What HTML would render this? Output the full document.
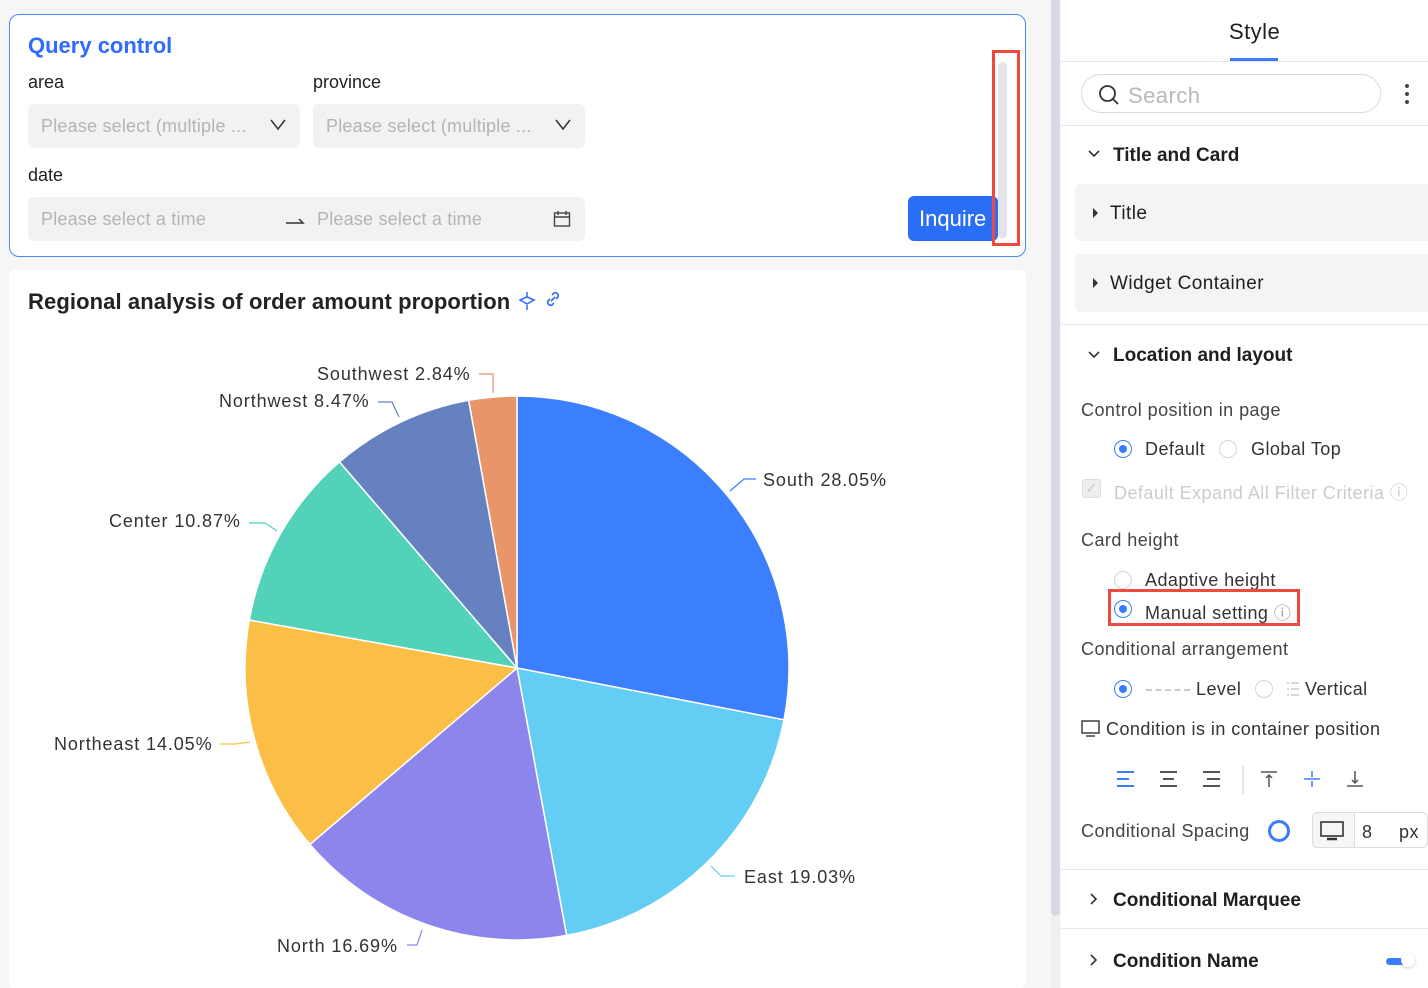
<!DOCTYPE html>
<html><head><meta charset="utf-8"><style>
*{box-sizing:border-box;margin:0;padding:0}
body{width:1428px;height:988px;overflow:hidden;background:#f6f6f7;font-family:"Liberation Sans",sans-serif;position:relative;color:#222}
.a{position:absolute;white-space:nowrap}
.sel{position:absolute;background:#f2f2f3;border-radius:6px;height:44px;color:#b4b4b8;font-size:18px;line-height:44px;padding-left:13px;letter-spacing:0.2px}
.rp{position:absolute;left:1061px;top:0;width:367px;height:988px;background:#fff}
.rp .a{letter-spacing:0.45px}
.rp .a.h{letter-spacing:0}
.hr{position:absolute;left:0;width:367px;height:1px;background:#e8e8ea}
.h{font-size:19px;font-weight:bold;color:#1f1f1f}
.t{font-size:18px;color:#444}
.rad{position:absolute;width:18px;height:18px;border-radius:50%;border:1px solid #d5d5d8;background:#fff}
.rad.on{border:1.5px solid #3b7cff}
.rad.on:after{content:"";position:absolute;left:3.5px;top:3.5px;width:8px;height:8px;border-radius:50%;background:#3b7cff}
</style></head><body>
<div class="a" style="left:9px;top:14px;width:1017px;height:243px;background:#fff;border:1.5px solid #4a8af4;border-radius:10px"></div>
<div class="a" style="left:28px;top:33px;font-size:22px;font-weight:bold;color:#2f6bff">Query control</div>
<div class="a" style="left:28px;top:72px;font-size:18px">area</div>
<div class="a" style="left:313px;top:72px;font-size:18px">province</div>
<div class="sel" style="left:28px;top:104px;width:272px">Please select (multiple ...<svg style="position:absolute;right:14px;top:15px" width="16" height="12" fill="none" stroke="#333" stroke-width="1.5"><path d="M1 1l7 9 7-9"/></svg></div>
<div class="sel" style="left:313px;top:104px;width:272px">Please select (multiple ...<svg style="position:absolute;right:14px;top:15px" width="16" height="12" fill="none" stroke="#333" stroke-width="1.5"><path d="M1 1l7 9 7-9"/></svg></div>
<div class="a" style="left:28px;top:165px;font-size:18px">date</div>
<div class="sel" style="left:28px;top:197px;width:557px">Please select a time<svg style="position:absolute;left:257px;top:20px" width="20" height="8" fill="none" stroke="#333" stroke-width="1.5"><path d="M1 6h17l-4-4"/></svg><span style="position:absolute;left:289px">Please select a time</span>
<svg style="position:absolute;left:525px;top:13px" width="18" height="18" viewBox="0 0 18 18" fill="none" stroke="#444" stroke-width="1.4"><rect x="1.5" y="3" width="15" height="13"/><path d="M1.5 7h15M5 1v4M13 1v4"/></svg></div>
<div class="a" style="left:908px;top:196px;width:90px;height:45px;background:#2b6ef6;border-radius:6px;color:#fff;font-size:22px;line-height:46px;padding-left:11px">Inquire</div>
<div class="a" style="left:998px;top:62px;width:9px;height:176px;background:#e4e4ea;border-radius:4px"></div>
<div class="a" style="left:992px;top:50px;width:28px;height:196px;border:3px solid #ee4a3f"></div>
<div class="a" style="left:9px;top:270px;width:1017px;height:718px;background:#fff;border-radius:6px"></div>
<div class="a" style="left:28px;top:289px;font-size:22px;font-weight:bold;color:#222;letter-spacing:0.1px">Regional analysis of order amount proportion</div>
<svg class="a" style="left:518px;top:291px" width="18" height="20" viewBox="0 0 18 20" fill="none" stroke="#2f6bff" stroke-width="1.5"><path d="M9 1v5M9 14v5M2 9l7 4 7-4-7-3z"/></svg>
<svg class="a" style="left:544px;top:290px" width="18" height="18" viewBox="0 0 18 18" fill="none" stroke="#2f6bff" stroke-width="1.6"><path d="M7 11l4-4M8 5l2-2a3 3 0 014 4l-2 2M10 13l-2 2a3 3 0 01-4-4l2-2"/></svg>
<svg class="a" style="left:0;top:0" width="1040" height="988">
<g stroke="#fff" stroke-width="1.5" stroke-linejoin="round">
<path d="M517 668L517 396A272 272 0 0 1 784 719.8Z" fill="#3b7efe"/>
<path d="M517 668L784 719.8A272 272 0 0 1 566.6 935.4Z" fill="#63cdf4"/>
<path d="M517 668L566.6 935.4A272 272 0 0 1 309.9 844.4Z" fill="#8b85ec"/>
<path d="M517 668L309.9 844.4A272 272 0 0 1 249.3 620Z" fill="#fbbf47"/>
<path d="M517 668L249.3 620A272 272 0 0 1 339.5 461.9Z" fill="#52d2b8"/>
<path d="M517 668L339.5 461.9A272 272 0 0 1 468.7 400.3Z" fill="#6581bf"/>
<path d="M517 668L468.7 400.3A272 272 0 0 1 517 396Z" fill="#e8956a"/>
</g>
<g fill="none" stroke-width="1.2">
<path d="M730 491l14-12h12" stroke="#3b7efe"/>
<path d="M711 866l10 10h14" stroke="#63cdf4"/>
<path d="M422 930l-5 15h-10" stroke="#8b85ec"/>
<path d="M250 742l-15 2h-15" stroke="#fbbf47"/>
<path d="M277 531l-12-8h-16" stroke="#52d2b8"/>
<path d="M399 417l-7-15h-14" stroke="#6581bf"/>
<path d="M493 393v-19h-14" stroke="#e8956a"/>
</g>
<g font-family="Liberation Sans,sans-serif" font-size="18" fill="#333" letter-spacing="0.9">
<text x="763" y="486">South 28.05%</text>
<text x="744" y="883">East 19.03%</text>
<text x="277" y="952">North 16.69%</text>
<text x="54" y="750">Northeast 14.05%</text>
<text x="109" y="527">Center 10.87%</text>
<text x="219" y="407">Northwest 8.47%</text>
<text x="317" y="380">Southwest 2.84%</text>
</g></svg>
<div class="a" style="left:1051px;top:0;width:9px;height:988px;background:#f0f0f3"></div>
<div class="a" style="left:1051px;top:0;width:9px;height:916px;background:#d9d9e5;border-radius:0 0 5px 5px"></div>
<div class="rp">
<div class="a" style="left:168px;top:19px;font-size:22px;color:#1f1f1f">Style</div>
<div class="a" style="left:169px;top:58px;width:48px;height:3px;background:#3b7cff"></div>
<div class="hr" style="top:61px"></div>
<div class="a" style="left:20px;top:74px;width:300px;height:39px;border:1px solid #d9d9dc;border-radius:20px"></div>
<svg class="a" style="left:37px;top:84px" width="22" height="22" viewBox="0 0 22 22" fill="none" stroke="#333" stroke-width="1.8"><circle cx="9.5" cy="9.5" r="7.5"/><path d="M15 15l5 5"/></svg>
<div class="a" style="left:67px;top:83px;font-size:22px;color:#b8b8bb">Search</div>
<div class="a" style="left:344px;top:84px;width:4px;height:4px;border-radius:2px;background:#444;box-shadow:0 8px 0 #444,0 16px 0 #444"></div>
<div class="hr" style="top:125px"></div>
<svg class="a" style="left:27px;top:150px" width="12" height="8" fill="none" stroke="#333" stroke-width="1.6"><path d="M1 1l5 5 5-5"/></svg>
<div class="a h" style="left:52px;top:145px">Title and Card</div>
<div class="a" style="left:14px;top:184px;width:360px;height:57px;background:#f4f4f5;border-radius:6px"></div>
<div class="a" style="left:32px;top:208px;width:0;height:0;border-left:5px solid #333;border-top:5px solid transparent;border-bottom:5px solid transparent"></div>
<div class="a" style="left:49px;top:203px;font-size:19px;color:#1f1f1f">Title</div>
<div class="a" style="left:14px;top:254px;width:360px;height:58px;background:#f4f4f5;border-radius:6px"></div>
<div class="a" style="left:32px;top:278px;width:0;height:0;border-left:5px solid #333;border-top:5px solid transparent;border-bottom:5px solid transparent"></div>
<div class="a" style="left:49px;top:273px;font-size:19px;color:#1f1f1f">Widget Container</div>
<div class="hr" style="top:324px"></div>
<svg class="a" style="left:27px;top:351px" width="12" height="8" fill="none" stroke="#333" stroke-width="1.6"><path d="M1 1l5 5 5-5"/></svg>
<div class="a h" style="left:52px;top:345px">Location and layout</div>
<div class="a t" style="left:20px;top:400px">Control position in page</div>
<div class="rad on" style="left:53px;top:440px"></div><div class="a t" style="left:84px;top:439px;color:#333">Default</div>
<div class="rad" style="left:158px;top:440px"></div><div class="a t" style="left:190px;top:439px;color:#333">Global Top</div>
<div class="a" style="left:21px;top:479px;width:19px;height:19px;background:#eee;border:1px solid #ddd;border-radius:3px;color:#ccc;font-size:14px;line-height:17px;text-align:center">&#10003;</div>
<div class="a t" style="left:53px;top:479px;color:#ccc">Default Expand All Filter Criteria &#9432;</div>
<div class="a t" style="left:20px;top:530px">Card height</div>
<div class="rad" style="left:53px;top:571px"></div><div class="a t" style="left:84px;top:570px;color:#333">Adaptive height</div>
<div class="rad on" style="left:53px;top:600px"></div><div class="a t" style="left:84px;top:599px;color:#333">Manual setting <span style="color:#999;font-size:17px">&#9432;</span></div>
<div class="a" style="left:47px;top:589px;width:192px;height:37px;border:3px solid #ee4a3f"></div>
<div class="a t" style="left:20px;top:639px">Conditional arrangement</div>
<div class="rad on" style="left:53px;top:680px"></div>
<div class="a" style="left:85px;top:689px;width:44px;border-top:2px dashed #ccc"></div>
<div class="a t" style="left:135px;top:679px;color:#333">Level</div>
<div class="rad" style="left:194px;top:680px"></div>
<svg class="a" style="left:225px;top:681px" width="14" height="16" fill="none" stroke="#ccc" stroke-width="1.5"><path d="M1 2h2M5 2h8M1 8h2M5 8h8M1 14h2M5 14h8"/></svg>
<div class="a t" style="left:244px;top:679px;color:#333">Vertical</div>
<svg class="a" style="left:20px;top:720px" width="19" height="18" viewBox="0 0 19 18" fill="none" stroke="#333" stroke-width="1.4"><rect x="1" y="1" width="17" height="12"/><path d="M5 16h9"/></svg>
<div class="a t" style="left:45px;top:719px;color:#333">Condition is in container position</div>
<svg class="a" style="left:50px;top:766px" width="260" height="30" fill="none" stroke-width="2">
<path d="M6 6h17M6 13h12M6 20h17" stroke="#3b7cff"/>
<path d="M49 6h17M52 13h11M49 20h17" stroke="#555"/>
<path d="M92 6h17M96 13h13M92 20h17" stroke="#555"/>
<path d="M132 0v28" stroke="#ccc" stroke-width="1"/>
<path d="M150 6h16M158 9v12M155 12l3-3 3 3" stroke="#555" stroke-width="1.5"/>
<path d="M193 13h16M201 5v6M201 15v6" stroke="#3b7cff" stroke-width="1.5"/>
<path d="M236 20h16M244 5v12M241 14l3 3 3-3" stroke="#555" stroke-width="1.5"/>
</svg>
<div class="a t" style="left:20px;top:821px">Conditional Spacing</div>
<div class="a" style="left:207px;top:820px;width:22px;height:22px;border:3px solid #3b7cff;border-radius:50%"></div>
<div class="a" style="left:251px;top:812px;width:116px;height:36px;border:1px solid #ddd;border-radius:6px;background:#fff"></div>
<div class="a" style="left:251px;top:812px;width:43px;height:36px;border:1px solid #ddd;border-radius:6px 0 0 6px;background:#f6f6f7"></div>
<svg class="a" style="left:258px;top:821px" width="26" height="20" viewBox="0 0 26 20" fill="none" stroke="#333" stroke-width="1.6"><rect x="2" y="1" width="22" height="14"/><path d="M8 18h10" stroke-width="2.5"/></svg>
<div class="a t" style="left:301px;top:822px;color:#333">8</div>
<div class="a t" style="left:338px;top:822px;color:#333">px</div>
<div class="hr" style="top:869px"></div>
<svg class="a" style="left:29px;top:893px" width="8" height="12" fill="none" stroke="#333" stroke-width="1.6"><path d="M1 1l5 5-5 5"/></svg>
<div class="a h" style="left:52px;top:890px">Conditional Marquee</div>
<div class="hr" style="top:928px"></div>
<svg class="a" style="left:29px;top:954px" width="8" height="12" fill="none" stroke="#333" stroke-width="1.6"><path d="M1 1l5 5-5 5"/></svg>
<div class="a h" style="left:52px;top:951px">Condition Name</div>
<div class="a" style="left:325px;top:958px;width:22px;height:7px;background:#3b7cff;border-radius:4px"></div>
<div class="a" style="left:340px;top:953px;width:14px;height:14px;background:#fff;border-radius:50%;box-shadow:0 1px 3px rgba(0,0,0,.2)"></div>
</div>
</body></html>
